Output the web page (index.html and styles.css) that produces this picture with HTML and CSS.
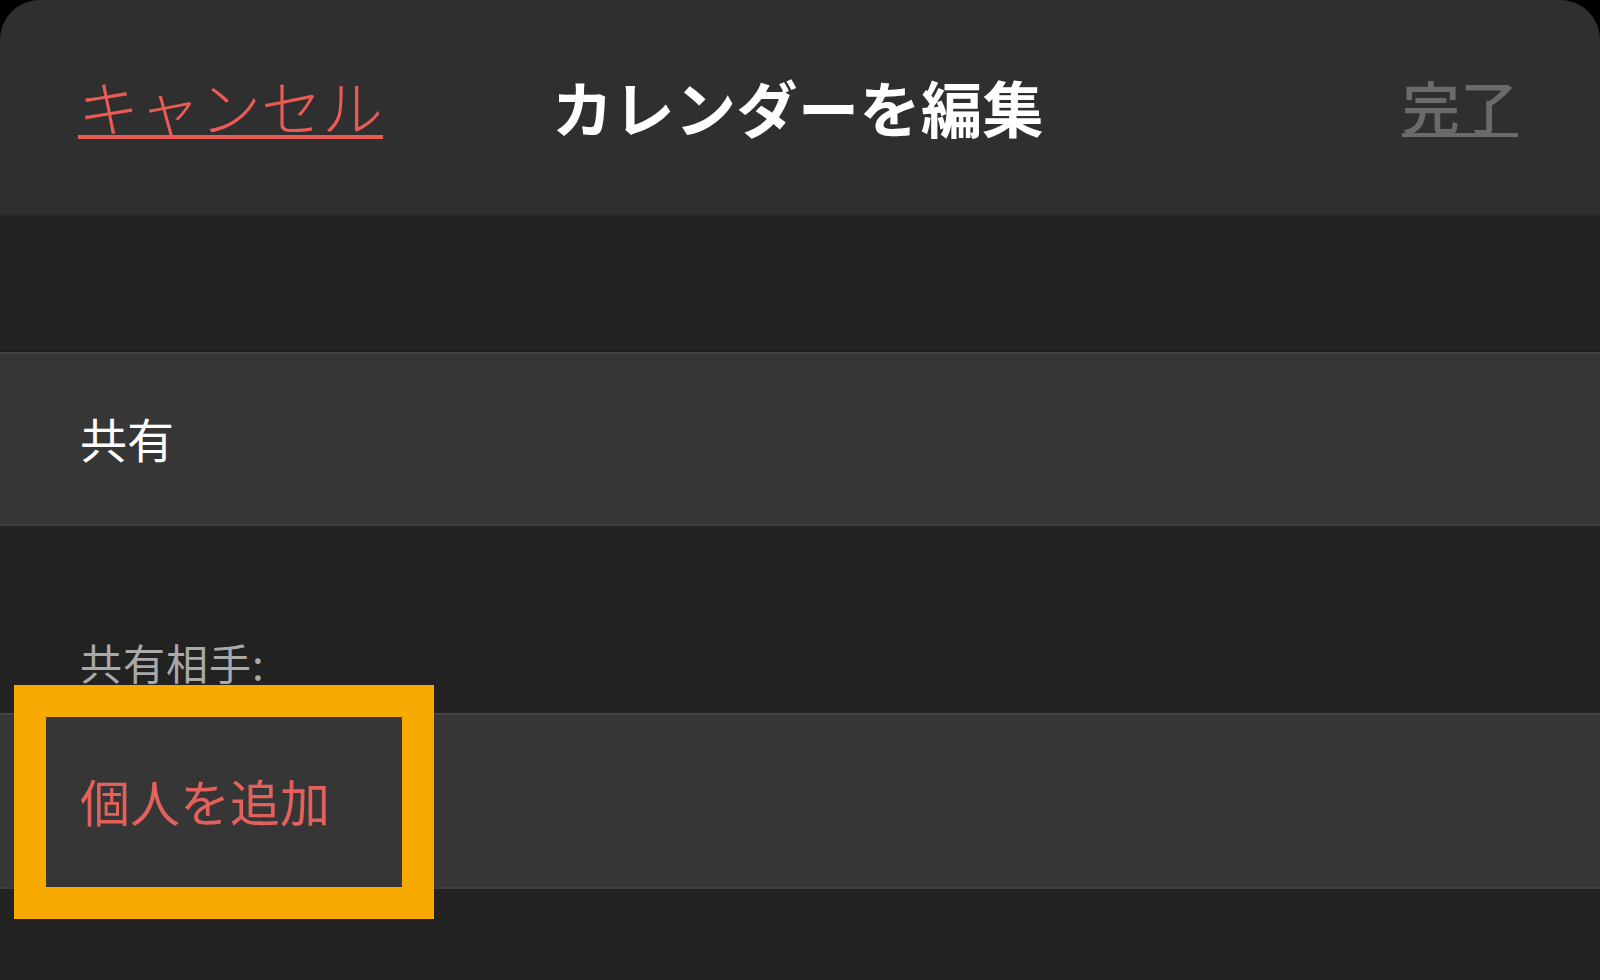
FILE: index.html
```html
<!DOCTYPE html>
<html lang="ja">
<head>
<meta charset="utf-8">
<title>カレンダーを編集</title>
<link rel="stylesheet" href="styles.css">
</head>
<body>
<div class="sheet">
  <header class="nav">
    <a class="nav-cancel">キャンセル</a>
    <h1 class="nav-title">カレンダーを編集</h1>
    <a class="nav-done">完了</a>
  </header>
  <div class="spacer"></div>
  <div class="row">
    <span class="row-text">共有</span>
  </div>
  <div class="section-label">
    <span>共有相手:</span>
  </div>
  <div class="row row-add">
    <span class="row-action">個人を追加</span>
    <div class="highlight"></div>
  </div>
  <div class="rest"></div>
</div>
</body>
</html>
```
FILE: styles.css
```css
html, body {
  margin: 0;
  padding: 0;
  background: #000;
  width: 1600px;
  height: 980px;
  overflow: hidden;
}
body {
  font-family: "Noto Sans CJK JP", "Noto Sans", sans-serif;
}
.sheet {
  width: 1600px;
  height: 980px;
  background: #222222;
  border-radius: 40px 40px 0 0;
  overflow: hidden;
  display: flex;
  flex-direction: column;
}
.nav {
  height: 214px;
  background: #2f2f2f;
  border-bottom: 2px solid #282828;
  display: grid;
  grid-template-columns: 1fr auto 1fr;
  align-items: center;
  padding: 0 82px 0 78px;
}
.nav-cancel {
  justify-self: start;
  color: #ea5b55;
  font-size: 61px;
  font-weight: 300;
  text-decoration: underline;
  text-decoration-thickness: 4px;
  text-underline-offset: 3px;
  line-height: 1;
  margin-top: -4px;
}
.nav-title {
  margin: 0;
  color: #ffffff;
  font-size: 61px;
  font-weight: 700;
  line-height: 1;
  letter-spacing: 0.5px;
  margin-top: -2px;
}
.nav-done {
  justify-self: end;
  color: #6a6a6a;
  font-size: 58px;
  font-weight: 500;
  text-decoration: underline;
  text-decoration-thickness: 4px;
  text-underline-offset: 3px;
  line-height: 1;
  margin-top: -4px;
}
.spacer {
  height: 134px;
  border-bottom: 2px solid #1b1b1b;
}
.row {
  position: relative;
  height: 170px;
  background: #363636;
  border-top: 2px solid #444444;
  border-bottom: 2px solid #3e3e3e;
  display: flex;
  align-items: center;
  padding-left: 80px;
}
.row-text {
  color: #ffffff;
  font-size: 47px;
  line-height: 1;
  margin-top: -4px;
}
.section-label {
  height: 187px;
  display: flex;
  align-items: flex-end;
  padding-left: 80px;
}
.section-label span {
  color: #a9a9a9;
  font-size: 42px;
  line-height: 1;
  margin-bottom: 30px;
  letter-spacing: 1px;
}
.row-add {
  height: 172px;
}
.row-action {
  color: #e4615b;
  font-size: 50px;
  line-height: 1;
  margin-top: -2px;
}
.highlight {
  position: absolute;
  left: 14px;
  top: -30px;
  width: 356px;
  height: 170px;
  border: 32px solid #f8a900;
}
.rest {
  flex: 1;
}
```
